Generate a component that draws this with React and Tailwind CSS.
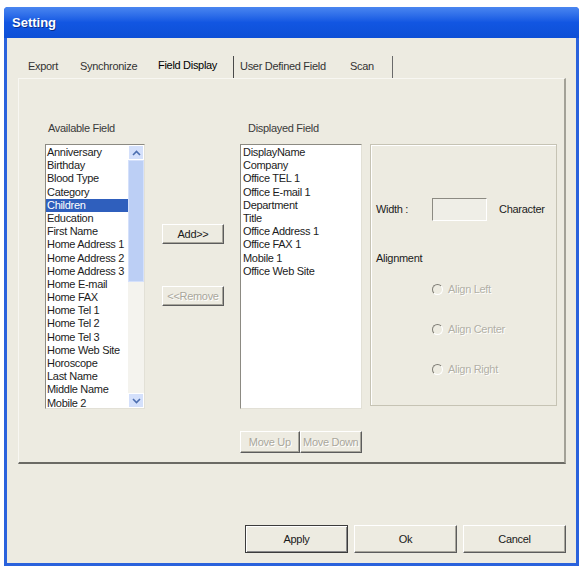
import React from 'react';

const available = [
  'Anniversary', 'Birthday', 'Blood Type', 'Category', 'Children', 'Education',
  'First Name', 'Home Address 1', 'Home Address 2', 'Home Address 3', 'Home E-mail',
  'Home FAX', 'Home Tel 1', 'Home Tel 2', 'Home Tel 3', 'Home Web Site', 'Horoscope',
  'Last Name', 'Middle Name', 'Mobile 2',
];

const displayed = [
  'DisplayName', 'Company', 'Office TEL 1', 'Office E-mail 1', 'Department', 'Title',
  'Office Address 1', 'Office FAX 1', 'Mobile 1', 'Office Web Site',
];

// classic raised 3D button
function Btn({ children, className = '', disabled, isDefault }) {
  return (
    <div
      className={
        'flex items-center justify-center text-[11px] whitespace-nowrap overflow-hidden ' +
        (isDefault
          ? 'border border-[#3c3c3c] shadow-[inset_1px_1px_0_#ffffff,inset_-1px_-1px_0_#8a8a8a] '
          : 'border border-t-white border-l-white border-r-[#5c5c5c] border-b-[#5c5c5c] shadow-[inset_-1px_-1px_0_#a8a69c] ') +
        (disabled ? 'text-[#a9a79c] [text-shadow:1px_1px_0_#ffffff] ' : 'text-[#1a1a1a] ') +
        className
      }
    >
      {children}
    </div>
  );
}

function Chevron({ down }) {
  return (
    <svg width="9" height="6" viewBox="0 0 9 6">
      <polyline
        points={down ? '1,1 4.5,4.5 8,1' : '1,5 4.5,1.5 8,5'}
        fill="none"
        stroke="#4d6fb0"
        strokeWidth="1.6"
      />
    </svg>
  );
}

function Radio({ label }) {
  return (
    <div className="flex items-center h-[13px] ml-[56px]">
      <div className="w-[11px] h-[11px] rounded-full border border-t-[#7e7c74] border-l-[#7e7c74] border-r-white border-b-white bg-[#edebe1]" />
      <span className="ml-[5px] text-[11px] text-[#b2b0a6] [text-shadow:1px_1px_0_#ffffff]">{label}</span>
    </div>
  );
}

export default function App() {
  return (
    <div className="w-[581px] h-[570px] bg-white pt-[7px] pl-[4px] font-['Liberation_Sans',Arial,sans-serif] overflow-hidden">
      <div className="w-[575px] h-[559px] flex flex-col bg-[#2a62dc] rounded-t-[4px]">
        {/* Title bar */}
        <div className="h-[31px] flex items-center pl-[8px] rounded-t-[4px] bg-gradient-to-b from-[#4a86f0] via-[#1256e2] to-[#0d4fd6]">
          <span className="text-white font-bold text-[13px] [text-shadow:1px_1px_0_#0a2f8c]">Setting</span>
        </div>

        <div className="flex-1 px-[3px] pb-[3px] flex">
          <div className="flex-1 bg-[#edebe1] flex flex-col text-[11px] tracking-[-0.3px] text-[#1c1c1c]">
            {/* Tabs */}
            <div className="mt-[17px] h-[23px] flex items-center whitespace-nowrap text-[#333]">
              <span className="ml-[21px] w-[32px]">Export</span>
              <span className="ml-[20px] w-[58px]">Synchronize</span>
              <span className="ml-[20px] w-[62px] text-black -mt-[3px]">Field Display</span>
              <span className="ml-[13px] w-[1px] h-[22px] bg-[#4a4a4a]" />
              <span className="ml-[6px] w-[92px]">User Defined Field</span>
              <span className="ml-[18px] w-[27px]">Scan</span>
              <span className="ml-[15px] w-[1px] h-[22px] bg-[#6a6a6a]" />
            </div>

            {/* Tab panel */}
            <div className="ml-[11px] w-[548px] h-[386px] border-t border-l border-t-[#f8f7f2] border-l-[#f8f7f2] border-r-2 border-r-[#a3a197] border-b-2 border-b-[#6b6a64] flex pl-[26px] pt-[42px]">
              {/* Available */}
              <div className="w-[100px] flex flex-col">
                <div className="h-[14px] leading-[14px] pl-[3px] text-[#3a3a3a] whitespace-nowrap">Available Field</div>
                <div className="mt-[9px] h-[265px] bg-white border border-t-[#8c8a82] border-l-[#8c8a82] border-r-[#e2e0d6] border-b-[#e2e0d6] flex overflow-hidden">
                  <div className="flex-1 pt-[1px] overflow-hidden">
                    {available.map((f) => (
                      <div
                        key={f}
                        className={
                          'h-[13.2px] leading-[13.2px] pl-[1px] whitespace-nowrap ' +
                          (f === 'Children' ? 'bg-[#2f5fbd] text-white' : 'text-[#1c1c1c]')
                        }
                      >
                        {f}
                      </div>
                    ))}
                  </div>
                  <div className="w-[16px] flex flex-col bg-[#f4f3ee]">
                    <div className="h-[15px] flex items-center justify-center bg-[#d4e0fb] border border-white">
                      <Chevron />
                    </div>
                    <div className="h-[122px] bg-[#bccff5] border border-[#d4e0fb]" />
                    <div className="flex-1" />
                    <div className="h-[15px] flex items-center justify-center bg-[#d4e0fb] border border-white">
                      <Chevron down />
                    </div>
                  </div>
                </div>
              </div>

              {/* Add / Remove */}
              <div className="w-[95px] pl-[17px] pt-[103px] flex flex-col">
                <Btn className="w-[62px] h-[20px]">Add&gt;&gt;</Btn>
                <Btn className="w-[62px] h-[20px] mt-[42px]" disabled>&lt;&lt;Remove</Btn>
              </div>

              {/* Displayed */}
              <div className="w-[122px] flex flex-col">
                <div className="h-[14px] leading-[14px] pl-[8px] text-[#3a3a3a] whitespace-nowrap">Displayed Field</div>
                <div className="mt-[9px] h-[265px] bg-white border border-t-[#8c8a82] border-l-[#8c8a82] border-r-[#e2e0d6] border-b-[#e2e0d6] pt-[1px] overflow-hidden">
                  {displayed.map((f) => (
                    <div key={f} className="h-[13.2px] leading-[13.2px] pl-[2px] whitespace-nowrap text-[#1c1c1c]">
                      {f}
                    </div>
                  ))}
                </div>
                <div className="mt-[22px] flex">
                  <Btn className="w-[60px] h-[22px]" disabled>Move Up</Btn>
                  <Btn className="w-[63px] h-[22px]" disabled>Move Down</Btn>
                </div>
              </div>

              {/* Options group */}
              <div className="ml-[8px] mt-[23px] w-[187px] h-[262px] border border-[#c6c3b4] shadow-[inset_1px_1px_0_#ffffff] flex flex-col pl-[5px]">
                <div className="mt-[53px] h-[23px] flex items-center">
                  <span className="w-[56px] text-[#1c1c1c]">Width :</span>
                  <div className="w-[55px] h-[23px] bg-[#efeee7] border border-t-[#8c8a82] border-l-[#8c8a82] border-r-white border-b-white" />
                  <span className="ml-[12px] text-[#1c1c1c]">Character</span>
                </div>
                <div className="mt-[31px] h-[13px] leading-[13px] text-[#1c1c1c]">Alignment</div>
                <div className="mt-[18px] flex flex-col gap-[27px]">
                  <Radio label="Align Left" />
                  <Radio label="Align Center" />
                  <Radio label="Align Right" />
                </div>
              </div>
            </div>

            {/* Bottom buttons */}
            <div className="mt-[61px] flex justify-end gap-[6px] pr-[10px]">
              <Btn className="w-[103px] h-[28px]" isDefault>Apply</Btn>
              <Btn className="w-[103px] h-[28px]">Ok</Btn>
              <Btn className="w-[103px] h-[28px]">Cancel</Btn>
            </div>
          </div>
        </div>
      </div>
    </div>
  );
}
